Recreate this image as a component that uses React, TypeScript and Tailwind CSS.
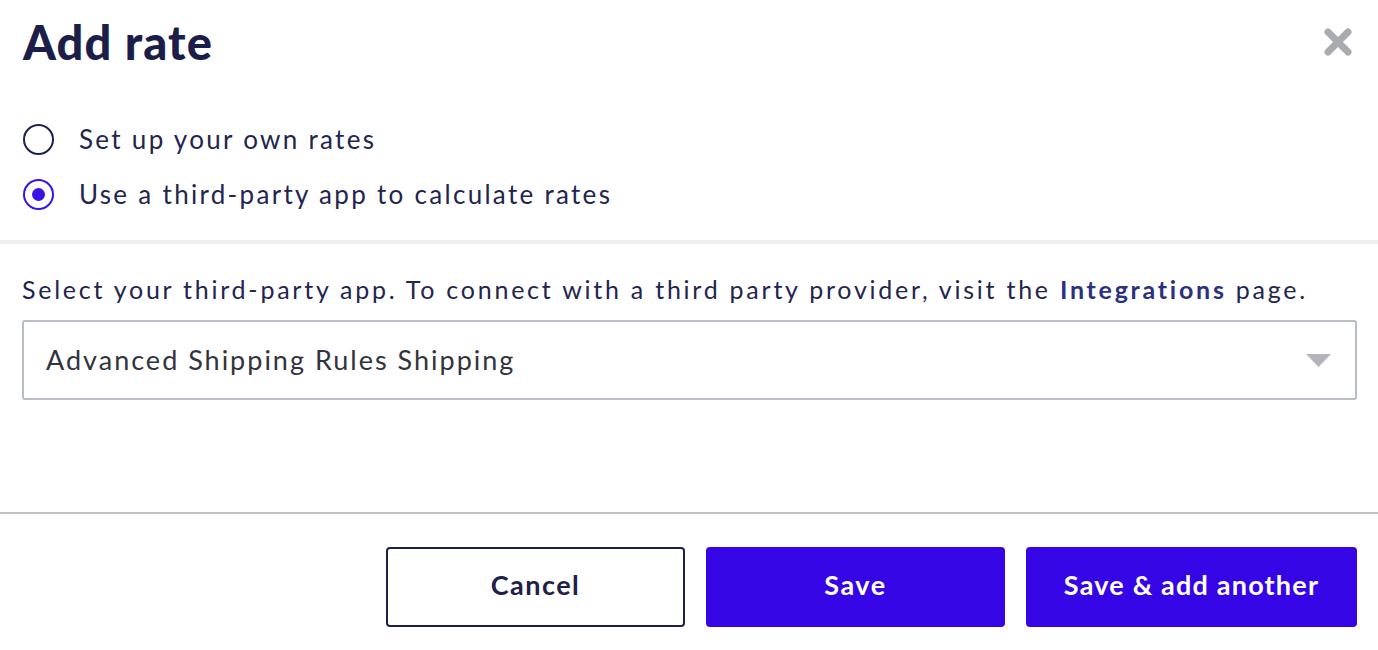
import { useState } from "react";

export default function App() {
  const [mode, setMode] = useState<"own" | "app">("app");

  const options = [
    { id: "own" as const, label: "Set up your own rates" },
    { id: "app" as const, label: "Use a third-party app to calculate rates" },
  ];

  return (
    <div className="min-h-screen bg-white text-[#1c1e4a] font-['Lato',sans-serif]">
      <div className="flex h-[84px] items-center justify-between pl-[23px] pr-[25px]">
        <h1 className="text-[47px] font-black tracking-[1.1px]">Add rate</h1>
        <button className="flex h-[30px] w-[30px] items-center justify-center">
          <svg width="30" height="30" viewBox="0 0 30 30">
            <path
              d="M5 5 L25 25 M25 5 L5 25"
              stroke="#aaaab1"
              strokeWidth="7"
              strokeLinecap="round"
            />
          </svg>
        </button>
      </div>

      <div className="mt-[28px] pl-[23px]">
        {options.map((o) => {
          const active = mode === o.id;
          return (
            <label
              key={o.id}
              onClick={() => setMode(o.id)}
              className="flex h-[55px] cursor-pointer items-center gap-[25px]"
            >
              <span
                className={
                  active
                    ? "flex h-[31px] w-[31px] items-center justify-center rounded-full border-2 border-[#3a12e8]"
                    : "flex h-[31px] w-[31px] items-center justify-center rounded-full border-2 border-[#1f2150]"
                }
              >
                {active && <span className="h-[13px] w-[13px] rounded-full bg-[#3a12e8]" />}
              </span>
              <span className="text-[26px] tracking-[2.3px] text-[#23254f]">{o.label}</span>
            </label>
          );
        })}
      </div>

      <div className="mt-[18px] h-[4px] bg-[#efefef]" />

      <div className="px-[22px] pr-[21px]">
        <p className="mt-[27px] h-[36px] whitespace-nowrap text-[25px] leading-[36px] tracking-[2.75px] text-[#23254f]">
          Select your third-party app. To connect with a third party provider, visit the{" "}
          <a className="font-bold text-[#2c3080]">Integrations</a> page.
        </p>
        <div className="mt-[13px] flex h-[80px] items-center justify-between rounded-[3px] border-2 border-[#b9bdc4] pl-[22px] pr-[24px]">
          <span className="text-[27px] tracking-[2px] text-[#333340]">
            Advanced Shipping Rules Shipping
          </span>
          <svg width="25" height="13" viewBox="0 0 25 13">
            <path d="M0 0 H25 L12.5 13 Z" fill="#b5b4bc" />
          </svg>
        </div>
      </div>

      <div className="mt-[112px] h-[2px] bg-[#c2c1c6]" />

      <div className="mt-[33px] flex justify-end gap-[21px] pr-[21px]">
        <button className="h-[80px] w-[299px] rounded-[4px] border-2 border-[#1e2145] bg-white pb-[3px] text-[27px] font-bold tracking-[1.5px] text-[#1e2145]">
          Cancel
        </button>
        <button className="h-[80px] w-[299px] rounded-[4px] bg-[#3505e6] pb-[3px] text-[27px] font-bold tracking-[1.5px] text-white">
          Save
        </button>
        <button className="h-[80px] w-[331px] rounded-[4px] bg-[#3505e6] pb-[3px] text-[27px] font-bold tracking-[1.2px] text-white">
          Save &amp; add another
        </button>
      </div>
    </div>
  );
}
